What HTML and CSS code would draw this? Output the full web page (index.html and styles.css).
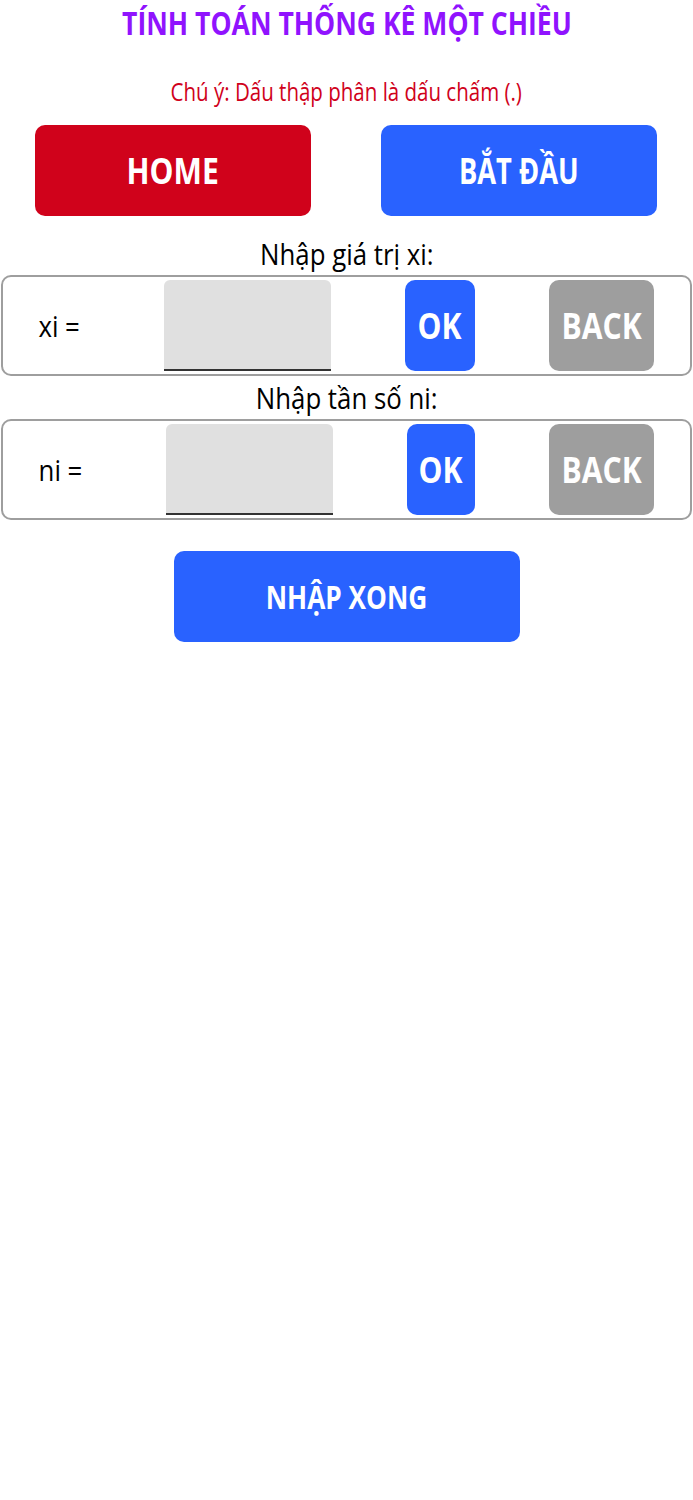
FILE: index.html
```html
<!DOCTYPE html>
<html lang="vi">
<head>
<meta charset="utf-8">
<title>Tính toán thống kê một chiều</title>
<link rel="stylesheet" href="styles.css">
</head>
<body>
  <h1 class="title"><span class="sx sx-title">TÍNH TOÁN THỐNG KÊ MỘT CHIỀU</span></h1>
  <p class="note"><span class="sx sx-note">Chú ý: Dấu thập phân là dấu chấm (.)</span></p>
  <div class="top-buttons">
    <button class="btn btn-big btn-red"><span class="sx">HOME</span></button>
    <button class="btn btn-big btn-blue"><span class="sx sx-start">BẮT ĐẦU</span></button>
  </div>

  <div class="label label-first"><span class="sx">Nhập giá trị xi:</span></div>
  <div class="row row-x">
    <div class="row-name"><span class="sx">xi =</span></div>
    <div class="field"></div>
    <button class="btn btn-ok btn-blue"><span class="sx">OK</span></button>
    <button class="btn btn-back"><span class="sx">BACK</span></button>
  </div>

  <div class="label"><span class="sx">Nhập tần số ni:</span></div>
  <div class="row">
    <div class="row-name"><span class="sx">ni =</span></div>
    <div class="field"></div>
    <button class="btn btn-ok btn-blue"><span class="sx">OK</span></button>
    <button class="btn btn-back"><span class="sx">BACK</span></button>
  </div>

  <div class="done-wrap">
    <button class="btn btn-done btn-blue"><span class="sx sx-done">NHẬP XONG</span></button>
  </div>
</body>
</html>
```

FILE: styles.css
```css
* { box-sizing: border-box; }

body {
  margin: 0;
  font-family: "Open Sans", "Noto Sans", sans-serif;
  background: #ffffff;
  color: #000000;
}

.sx {
  display: inline-block;
  transform: scaleX(0.86);
  white-space: nowrap;
}

.sx-title { transform: scaleX(0.83); }
.sx-note { transform: scaleX(0.82); }
.sx-start { transform: scaleX(0.78); }
.sx-done { transform: scaleX(0.82); }

.title {
  margin: 3px 0 0;
  text-align: center;
  font-size: 32px;
  line-height: 40px;
  font-weight: 700;
  color: #9013fe;
}

.note {
  margin: 30px 0 0;
  text-align: center;
  font-size: 25px;
  line-height: 36px;
  color: #d0021b;
}

.top-buttons {
  margin-top: 16px;
  padding: 0 36px 0 35px;
  display: flex;
  justify-content: space-between;
}

.btn {
  border: none;
  padding: 0;
  margin: 0;
  font-family: inherit;
  font-weight: 700;
  color: #ffffff;
  display: flex;
  align-items: center;
  justify-content: center;
  border-radius: 10px;
}

.btn-big {
  width: 276px;
  height: 91px;
  font-size: 35px;
}

.btn-red { background: #d0021b; }
.btn-blue { background: #2962ff; }

.label {
  margin-top: 2px;
  text-align: center;
  font-size: 30px;
  line-height: 40px;
}

.label-first { margin-top: 18px; }

.row {
  margin: 1px 1px 0;
  height: 101px;
  border: 2px solid #9e9e9e;
  border-radius: 10px;
  padding: 3px 0;
  display: flex;
  align-items: stretch;
}

.row-name {
  width: 163px;
  padding-left: 32px;
  display: flex;
  align-items: center;
  font-size: 30px;
}

.field {
  width: 167px;
  background: #e0e0e0;
  border-bottom: 2px solid #333333;
  border-radius: 6px 6px 0 0;
}

.btn-ok {
  margin-left: 74px;
  width: 68px;
  font-size: 35px;
}

.btn-back {
  margin-left: 74px;
  width: 105px;
  font-size: 35px;
  background: #9e9e9e;
}

.row-x .row-name { width: 161px; }
.row-x .btn-ok { width: 70px; }

.done-wrap {
  margin-top: 31px;
  display: flex;
  justify-content: center;
}

.btn-done {
  width: 346px;
  height: 91px;
  font-size: 32px;
}
```
